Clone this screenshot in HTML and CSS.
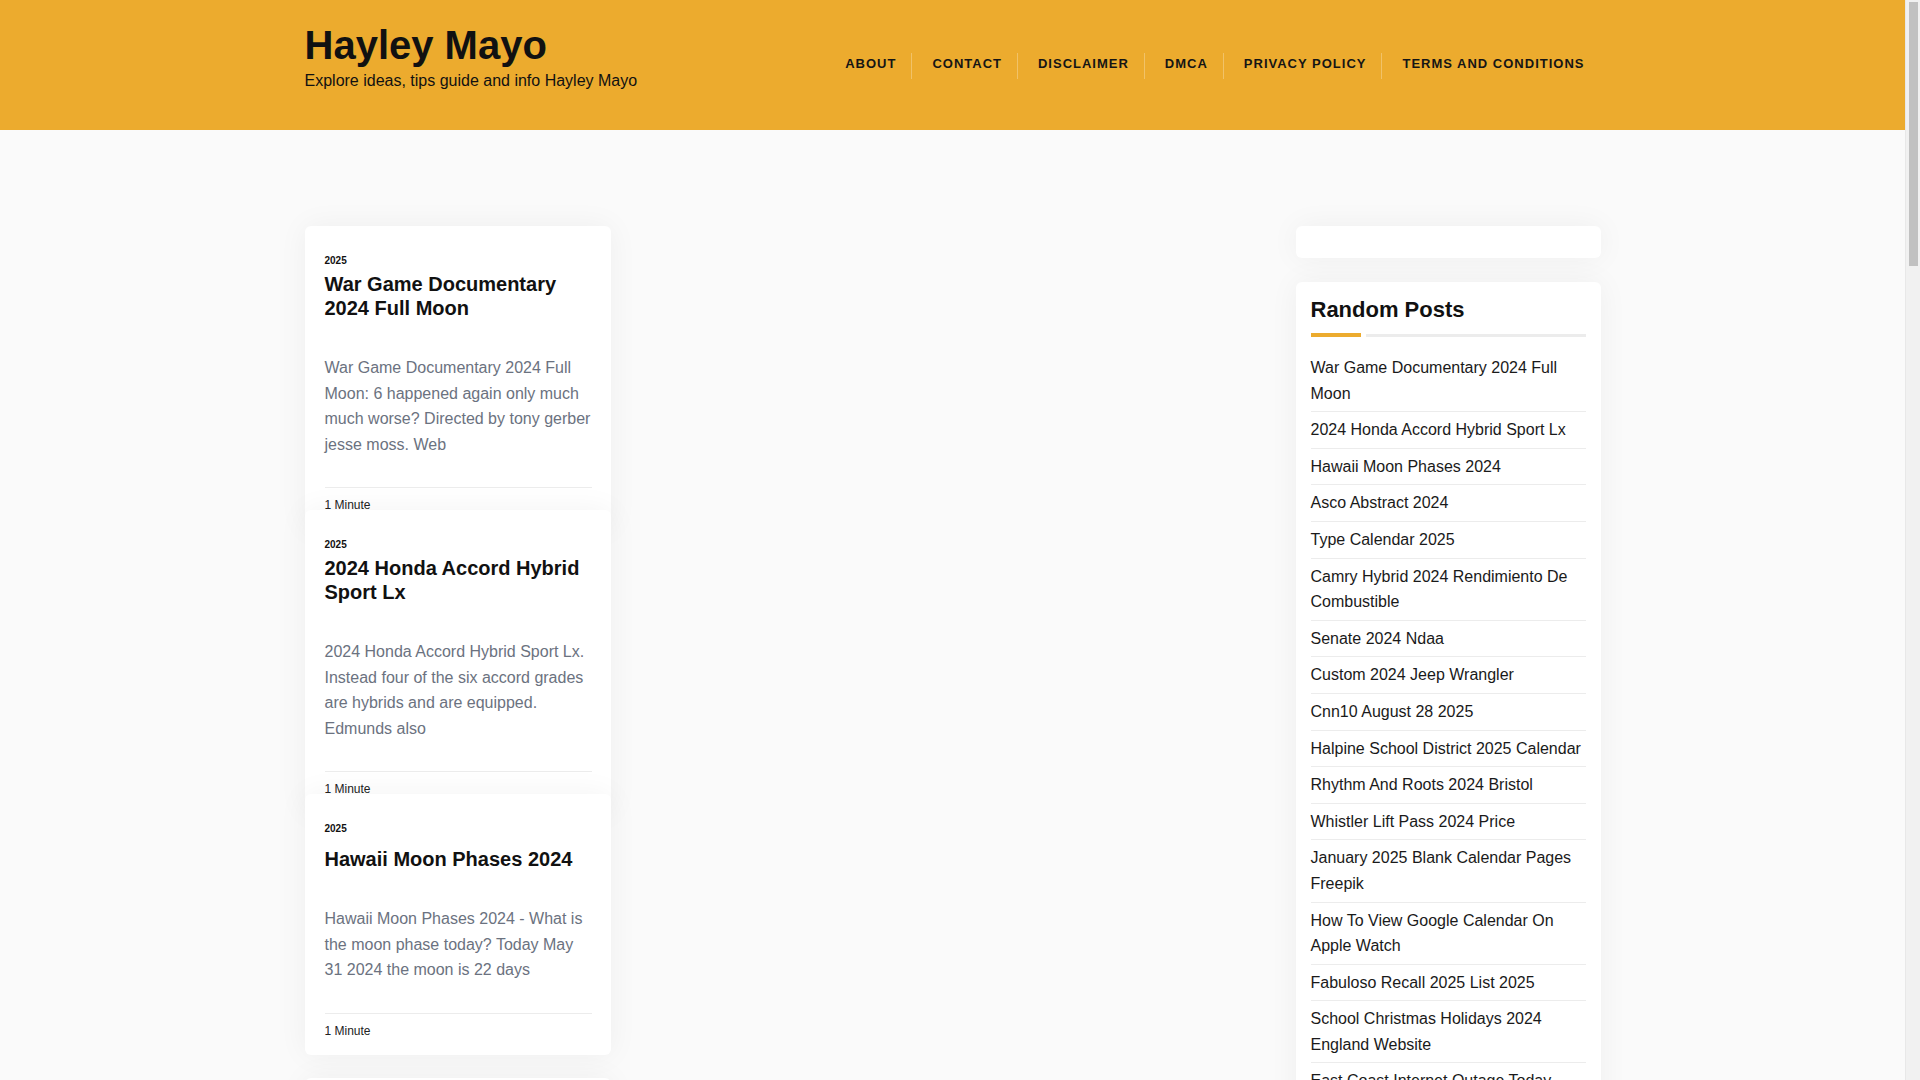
FILE: index.html
```html
<!DOCTYPE html>
<html lang="en">
<head>
<meta charset="utf-8">
<title>Hayley Mayo</title>
<link rel="stylesheet" href="styles.css">
</head>
<body>
<div class="page">
<header class="site-header">
  <div class="container header-inner">
    <div class="branding">
      <h1 class="site-title">Hayley Mayo</h1>
      <p class="site-tagline">Explore ideas, tips guide and info Hayley Mayo</p>
    </div>
    <nav class="main-nav">
      <ul class="menu">
        <li class="menu-item">ABOUT</li>
        <li class="menu-item">CONTACT</li>
        <li class="menu-item">DISCLAIMER</li>
        <li class="menu-item">DMCA</li>
        <li class="menu-item">PRIVACY POLICY</li>
        <li class="menu-item">TERMS AND CONDITIONS</li>
      </ul>
    </nav>
  </div>
</header>

<main class="site-main">
  <div class="container content-grid">
    <section class="posts">
      <article class="card">
        <div class="card-meta">2025</div>
        <h2 class="card-title">War Game Documentary 2024 Full Moon</h2>
        <p class="card-excerpt">War Game Documentary 2024 Full Moon: 6 happened again only much much worse? Directed by tony gerber jesse moss. Web</p>
        <div class="card-footer">1 Minute</div>
      </article>
      <article class="card">
        <div class="card-meta">2025</div>
        <h2 class="card-title">2024 Honda Accord Hybrid Sport Lx</h2>
        <p class="card-excerpt">2024 Honda Accord Hybrid Sport Lx. Instead four of the six accord grades are hybrids and are equipped. Edmunds also</p>
        <div class="card-footer">1 Minute</div>
      </article>
      <article class="card">
        <div class="card-meta">2025</div>
        <h2 class="card-title card-title--short">Hawaii Moon Phases 2024</h2>
        <p class="card-excerpt">Hawaii Moon Phases 2024 - What is the moon phase today? Today May 31 2024 the moon is 22 days</p>
        <div class="card-footer">1 Minute</div>
      </article>
      <article class="card card--peek"></article>
    </section>

    <aside class="sidebar">
      <div class="widget widget--empty"></div>
      <div class="widget widget--posts">
        <h3 class="widget-title">Random Posts</h3>
        <div class="widget-rule"><span class="rule-accent"></span><span class="rule-line"></span></div>
        <ul class="post-list">
          <li class="post-item">War Game Documentary 2024 Full Moon</li>
          <li class="post-item">2024 Honda Accord Hybrid Sport Lx</li>
          <li class="post-item">Hawaii Moon Phases 2024</li>
          <li class="post-item">Asco Abstract 2024</li>
          <li class="post-item">Type Calendar 2025</li>
          <li class="post-item">Camry Hybrid 2024 Rendimiento De Combustible</li>
          <li class="post-item">Senate 2024 Ndaa</li>
          <li class="post-item">Custom 2024 Jeep Wrangler</li>
          <li class="post-item">Cnn10 August 28 2025</li>
          <li class="post-item">Halpine School District 2025 Calendar</li>
          <li class="post-item">Rhythm And Roots 2024 Bristol</li>
          <li class="post-item">Whistler Lift Pass 2024 Price</li>
          <li class="post-item">January 2025 Blank Calendar Pages Freepik</li>
          <li class="post-item">How To View Google Calendar On Apple Watch</li>
          <li class="post-item">Fabuloso Recall 2025 List 2025</li>
          <li class="post-item">School Christmas Holidays 2024 England Website</li>
          <li class="post-item">East Coast Internet Outage Today</li>
        </ul>
      </div>
    </aside>
  </div>
</main>
</div>
<div class="scrollbar" aria-hidden="true"><div class="scrollbar-thumb"></div></div>
</body>
</html>
```

FILE: styles.css
```css
* {
  box-sizing: border-box;
}

html, body {
  margin: 0;
  padding: 0;
}

html {
  overflow: hidden;
}

body {
  font-family: "Liberation Sans", Arial, Helvetica, sans-serif;
  background: #fafafa;
  color: #111;
  height: 100vh;
  overflow: hidden;
}

.page {
  margin-right: 15px;
}

.container {
  width: 1296px;
  margin: 0 auto;
}

/* Header */
.site-header {
  background: #ecab2e;
  height: 130px;
}

.header-inner {
  display: flex;
  justify-content: space-between;
  align-items: flex-start;
}

.branding {
  padding-top: 21px;
}

.site-title {
  margin: 0;
  font-size: 40px;
  line-height: 48px;
  font-weight: 700;
  color: #111;
}

.site-tagline {
  margin: 0;
  font-size: 16px;
  line-height: 24px;
  color: #111;
}

.main-nav {
  padding-top: 53px;
  margin-right: 1px;
}

.menu {
  list-style: none;
  margin: 0;
  padding: 0;
  display: flex;
}

.menu-item {
  font-size: 13px;
  font-weight: 700;
  letter-spacing: 1px;
  line-height: 22px;
  padding: 0 15px 4px 20px;
  color: #151515;
  border-left: 1px solid rgba(255, 255, 255, 0.28);
}

.menu-item:first-child {
  border-left: 0;
  padding-left: 18px;
}

/* Main */
.site-main {
  padding: 96px 0 60px;
}

.content-grid {
  display: grid;
  grid-template-columns: 1fr 305px;
  column-gap: 24px;
  align-items: start;
}

.posts {
  display: grid;
  grid-template-columns: 306px;
  grid-auto-rows: 284px;
}

.card {
  align-self: start;
  background: #fff;
  border-radius: 6px;
  box-shadow: 0 0 30px rgba(0, 0, 0, 0.05);
  padding: 27px 19px 15px 20px;
}

.card--peek {
  height: 240px;
}

.card-meta {
  font-size: 10px;
  line-height: 15px;
  font-weight: 700;
  color: #111;
}

.card-title {
  margin: 4px 0 0;
  font-size: 20px;
  line-height: 24px;
  font-weight: 700;
  color: #111;
}

.card-title--short {
  margin-top: 11px;
}

.card-excerpt {
  margin: 35px 0 30px;
  font-size: 16px;
  line-height: 1.6;
  color: #6b7280;
}

.card-footer {
  border-top: 1px solid #ececec;
  padding-top: 8px;
  font-size: 12px;
  line-height: 18px;
  color: #222;
}

/* Sidebar */
.sidebar {
  display: flex;
  flex-direction: column;
  gap: 24px;
}

.widget {
  background: #fff;
  border-radius: 6px;
  box-shadow: 0 0 30px rgba(0, 0, 0, 0.05);
}

.widget--empty {
  height: 32px;
}

.widget--posts {
  padding: 15px;
}

.widget-title {
  margin: 0 0 10px;
  font-size: 22px;
  line-height: 26px;
  font-weight: 700;
  color: #111;
}

.widget-rule {
  display: flex;
  align-items: center;
  gap: 5px;
  margin-bottom: 13px;
}

.rule-accent {
  width: 50px;
  height: 4px;
  background: #ecab2e;
}

.rule-line {
  flex: 1;
  height: 3px;
  background: #ececec;
}

.post-list {
  list-style: none;
  margin: 0;
  padding: 0;
}

.post-item {
  font-size: 16px;
  line-height: 1.6;
  padding: 5px 0;
  border-bottom: 1px solid #ececec;
  color: #1a1a1a;
}

/* Drawn scrollbar overlay (the reference shows the browser's scrollbar) */
.scrollbar {
  position: fixed;
  top: 0;
  right: 0;
  width: 15px;
  height: 100vh;
  background: #f1f1f1;
  border-left: 1px solid #e8e8e8;
  padding: 2px 2px 0 3px;
}

.scrollbar-thumb {
  height: 264px;
  background: #c1c1c1;
  border-radius: 0;
}
```
